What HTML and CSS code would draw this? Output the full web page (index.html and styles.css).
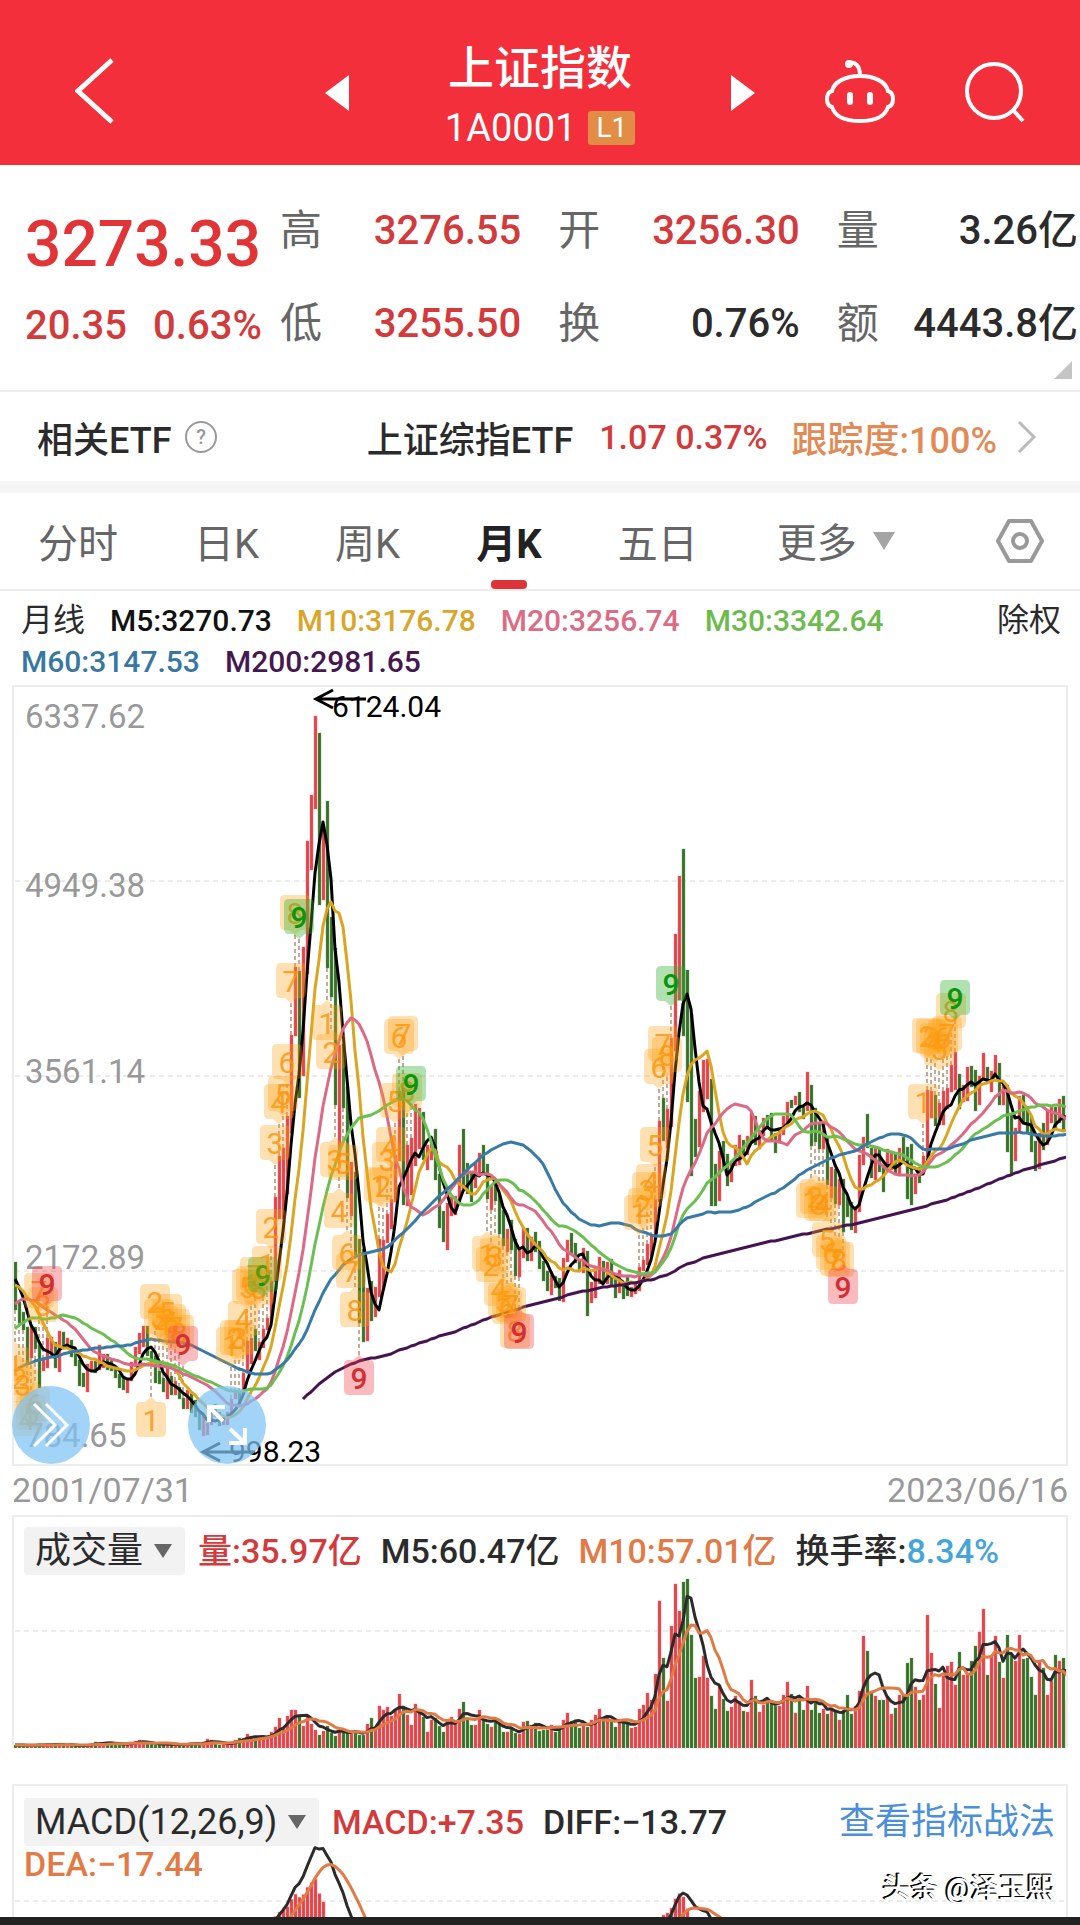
FILE: index.html
```html
<!DOCTYPE html>
<html lang="zh-CN">
<head>
  <meta charset="UTF-8">
  <meta name="viewport" content="width=device-width, initial-scale=1.0">
  <title>上证指数</title>
  <link rel="stylesheet" href="styles.css">
</head>
<body>

<header class="topbar">
  <button class="icon-btn back-btn" aria-label="返回">
    <svg width="40" height="66" viewBox="0 0 40 66"><path d="M37 2 3 33 37 64" fill="none" stroke="#fff" stroke-width="5"/></svg>
  </button>
  <div class="title-group">
    <button class="icon-btn" aria-label="上一个">
      <svg width="24" height="36" viewBox="0 0 24 36"><path d="M24 0 0 18 24 36z" fill="#fff"/></svg>
    </button>
    <div class="title">
      <h1>上证指数</h1>
      <div class="code">1A0001 <span class="level">L1</span></div>
    </div>
    <button class="icon-btn" aria-label="下一个">
      <svg width="24" height="36" viewBox="0 0 24 36"><path d="M0 0 24 18 0 36z" fill="#fff"/></svg>
    </button>
  </div>
  <div class="tools">
    <button class="icon-btn" aria-label="智能助手">
      <svg width="70" height="66" viewBox="0 0 70 66" fill="none" stroke="#fff" stroke-width="4" stroke-linecap="round">
        <path d="M24 4c6-2 11 3 11 12"/>
        <circle cx="24" cy="5" r="2"/>
        <path d="M35 17C20 17 9 23 7 32c-4 1-5 4-5 8s1 7 5 8c3 10 13 14 28 14s25-4 28-14c4-1 5-4 5-8s-1-7-5-8c-2-9-13-15-28-15z"/>
        <path d="M25 36v7M45 36v7" stroke-width="6"/>
      </svg>
    </button>
    <button class="icon-btn" aria-label="搜索">
      <svg width="62" height="62" viewBox="0 0 62 62" fill="none" stroke="#fff" stroke-width="4">
        <circle cx="30" cy="30" r="27"/><path d="M49 49 59 60"/>
      </svg>
    </button>
  </div>
</header>

<section class="quote">
  <div class="price">
    <div class="last">3273.33</div>
    <div class="change"><span>20.35</span><span>0.63%</span></div>
  </div>
  <dl class="stats">
    <div><dt>高</dt><dd class="up">3276.55</dd></div>
    <div><dt>开</dt><dd class="up">3256.30</dd></div>
    <div><dt>量</dt><dd>3.26亿</dd></div>
    <div><dt>低</dt><dd class="up">3255.50</dd></div>
    <div><dt>换</dt><dd>0.76%</dd></div>
    <div><dt>额</dt><dd>4443.8亿</dd></div>
  </dl>
  <svg class="corner" width="18" height="18" viewBox="0 0 18 18"><path d="M18 0v18H0z" fill="#c4c4c4"/></svg>
</section>

<a class="etf" href="#etf">
  <span>相关ETF</span>
  <svg class="help" width="32" height="32" viewBox="0 0 32 32">
    <circle cx="16" cy="16" r="15" fill="none" stroke="#999" stroke-width="2"/>
    <text x="16" y="23" text-anchor="middle">?</text>
  </svg>
  <span class="etf-name">上证综指ETF</span>
  <span class="etf-price up">1.07 0.37%</span>
  <span class="track">跟踪度:100%</span>
  <svg width="20" height="34" viewBox="0 0 20 34"><path d="M2 2 17 17 2 32" fill="none" stroke="#bbb" stroke-width="3"/></svg>
</a>

<nav class="tabs">
  <button>分时</button>
  <button>日K</button>
  <button>周K</button>
  <button class="active">月K</button>
  <button>五日</button>
  <label class="more">
    <select aria-label="更多周期"><option>更多</option></select>
    <svg width="22" height="18" viewBox="0 0 22 18"><path d="M0 0h22L11 18z" fill="#a5a5a5"/></svg>
  </label>
  <button class="settings" aria-label="设置">
    <svg width="50" height="46" viewBox="0 0 50 46" fill="none" stroke="#999" stroke-width="4" stroke-linejoin="round">
      <path d="M14 3h22l11 20-11 20H14L3 23z"/><circle cx="25" cy="23" r="7"/>
    </svg>
  </button>
</nav>

<div class="ma-legend">
  <div class="ma-values">
    <span class="cn">月线</span>
    <span class="m5">M5:3270.73</span>
    <span class="m10">M10:3176.78</span>
    <span class="m20">M20:3256.74</span>
    <span class="m30">M30:3342.64</span>
    <span class="m60">M60:3147.53</span>
    <span class="m200">M200:2981.65</span>
  </div>
  <button class="cn adjust">除权</button>
</div>

<main class="charts">
  <div class="kline">
    <svg id="kline" viewBox="-1 1 1052 777"></svg>
    <button class="round expand" aria-label="展开">
      <svg viewBox="0 0 78 78" fill="none" stroke="#fff" stroke-width="3"><path d="M22 18 43 39 22 60M34 18 55 39 34 60"/></svg>
    </button>
    <button class="round fullscreen" aria-label="全屏">
      <svg viewBox="0 0 78 78" fill="none" stroke="#fff" stroke-width="4"><path d="M35 35 21 21M21 36V21H37M42 43 57 57M57 42V57H41"/></svg>
    </button>
  </div>
  <div class="dates"><span>2001/07/31</span><span>2023/06/16</span></div>

  <section class="panel volume">
    <div class="panel-legend">
      <label class="picker">
        <select aria-label="指标"><option>成交量</option></select>
        <svg width="18" height="14" viewBox="0 0 18 14"><path d="M0 0h18L9 14z" fill="#666"/></svg>
      </label>
      <span class="up">量:35.97亿</span>
      <span>M5:60.47亿</span>
      <span class="orange">M10:57.01亿</span>
      <span>换手率:<span class="blue">8.34%</span></span>
    </div>
    <svg id="volume" viewBox="-1 0 1052 172"></svg>
  </section>

  <section class="panel macd">
    <svg id="macd" viewBox="-1 0 1052 132"></svg>
    <div class="panel-legend">
      <label class="picker">
        <select aria-label="指标"><option>MACD(12,26,9)</option></select>
        <svg width="18" height="14" viewBox="0 0 18 14"><path d="M0 0h18L9 14z" fill="#666"/></svg>
      </label>
      <span class="up">MACD:+7.35</span>
      <span>DIFF:−13.77</span>
      <a class="guide" href="#guide">查看指标战法</a>
    </div>
    <div class="dea orange">DEA:−17.44</div>
    <div class="credit">头条 @泽玉熙</div>
  </section>
</main>
<div class="bottom-bar"></div>

<script src="script.js"></script>
</body>
</html>
```
FILE: styles.css
```css
* {
  box-sizing: border-box;
}
body {
  margin: 0;
  background: #fff;
  color: #2b2b2b;
  font-family: Roboto, "Noto Sans CJK SC", sans-serif;
  font-weight: 500;
}
button, select {
  padding: 0;
  border: none;
  background: none;
  color: inherit;
  font: inherit;
  cursor: pointer;
}
select {
  appearance: none;
}
svg {
  display: block;
}
.up {
  color: #d23a3c;
}
.orange {
  color: #e27a45;
}
.blue {
  color: #45a5d8;
}

/* header */
.topbar {
  display: grid;
  grid-template-columns: 1fr auto 1fr;
  height: 165px;
  padding: 0 54px;
  background: #f22f3a;
  color: #fff;
}
.back-btn {
  justify-self: start;
  margin: 16px 0 0 21px;
}
.title-group {
  display: flex;
  align-items: center;
  gap: 96px;
  padding-top: 20px;
}
.title {
  padding-top: 8px;
  text-align: center;
}
.title h1 {
  margin: 0;
  font-size: 46px;
  line-height: 62px;
  font-weight: 500;
}
.code {
  display: flex;
  align-items: center;
  justify-content: center;
  gap: 12px;
  font-size: 38px;
  font-weight: 400;
  line-height: 58px;
}
.level {
  padding: 0 8px;
  border-radius: 3px;
  background: #e28d45;
  font-size: 28px;
  line-height: 34px;
}
.tools {
  display: flex;
  align-items: center;
  justify-content: flex-end;
  gap: 69px;
  padding-top: 18px;
}

/* quote */
.quote {
  display: grid;
  grid-template-columns: 255px 1fr;
  position: relative;
  height: 227px;
  padding: 27px 2px 0 25px;
  border-bottom: 2px solid #ececec;
}
.last {
  color: #e03436;
  font-size: 64px;
  line-height: 106px;
}
.change {
  display: flex;
  gap: 26px;
  color: #d23a3c;
  font-size: 40px;
  line-height: 56px;
}
.stats {
  display: grid;
  grid-template-columns: repeat(3, 1fr);
  column-gap: 37px;
  grid-auto-rows: 93px;
  margin: 0;
}
.stats div {
  display: flex;
  justify-content: space-between;
  font-size: 40px;
  line-height: 78px;
  white-space: nowrap;
}
.stats dt {
  color: #666;
  font-size: 42px;
  font-weight: 400;
}
.stats dd {
  margin: 0;
}
.corner {
  position: absolute;
  right: 8px;
  bottom: 11px;
}

/* related etf */
.etf {
  display: flex;
  align-items: center;
  height: 101px;
  padding: 0 43px 0 37px;
  border-bottom: 12px solid #f5f5f5;
  color: inherit;
  font-size: 36px;
  text-decoration: none;
}
.help {
  margin-left: 14px;
}
.help text {
  fill: #999;
  font-size: 20px;
}
.etf-name {
  margin-left: auto;
}
.etf-price {
  margin: 0 24px 0 26px;
  font-size: 34px;
}
.track {
  margin-right: 20px;
  color: #e28a55;
}

/* period tabs */
.tabs {
  display: flex;
  align-items: center;
  gap: 76px;
  height: 98px;
  padding: 0 35px 0 38px;
  border-bottom: 2px solid #ececec;
  color: #666;
  font-size: 40px;
  font-weight: 400;
}
.tabs .active {
  position: relative;
  height: 100%;
  color: #222;
  font-weight: 700;
}
.active::after {
  content: "";
  position: absolute;
  left: 50%;
  bottom: 0;
  width: 36px;
  height: 9px;
  margin-left: -18px;
  border-radius: 4px;
  background: #dc3438;
}
.more {
  display: flex;
  align-items: center;
  gap: 16px;
  padding-left: 3px;
}
.more select {
  padding-top: 4px;
}
.settings {
  margin-left: auto;
}

/* moving averages */
.ma-legend {
  display: flex;
  justify-content: space-between;
  padding: 9px 19px 3px 21px;
  font-size: 30px;
  line-height: 41px;
}
.ma-values {
  display: flex;
  flex-wrap: wrap;
  column-gap: 25px;
  max-width: 900px;
}
.cn {
  font-size: 32px;
  font-weight: 400;
}
.adjust {
  align-self: flex-start;
  line-height: 41px;
}
.m5 { color: #111; }
.m10 { color: #d9a62a; }
.m20 { color: #dc6b84; }
.m30 { color: #6dbb4e; }
.m60 { color: #3778a3; }
.m200 { color: #471850; }

/* charts */
.charts {
  padding: 0 12px;
}
.kline {
  position: relative;
  border: 2px solid #ececec;
}
.kline > svg, .panel > svg {
  width: 100%;
}
.round {
  position: absolute;
  bottom: 0;
  width: 78px;
  height: 78px;
  border-radius: 50%;
  background: rgba(126, 196, 245, 0.72);
}
.expand {
  left: -2px;
}
.fullscreen {
  left: 174px;
}
.dates {
  display: flex;
  justify-content: space-between;
  color: #999;
  font-size: 34px;
  font-weight: 400;
  line-height: 49px;
}
.panel {
  border: 2px solid #ececec;
  border-bottom: none;
}
.panel-legend {
  display: flex;
  align-items: center;
  gap: 19px;
  padding: 10px 11px 0 10px;
  font-size: 34px;
  line-height: 48px;
  white-space: nowrap;
}
.picker {
  display: flex;
  align-items: center;
  gap: 10px;
  margin-right: -6px;
  padding: 0 13px 0 11px;
  border-radius: 4px;
  background: #f2f2f2;
  font-size: 36px;
  font-weight: 400;
}
.picker select {
  height: 48px;
}
.volume {
  margin-bottom: 36px;
}
.volume .panel-legend {
  padding-bottom: 1px;
}
.macd {
  position: relative;
  height: 133px;
  overflow: hidden;
}
.macd > svg {
  position: absolute;
  top: 0;
  left: 0;
}
.macd .panel-legend, .dea {
  position: relative;
}
.macd .panel-legend {
  padding-top: 12px;
}
.guide {
  margin-left: auto;
  color: #4a8fd8;
  font-size: 36px;
  font-weight: 400;
  text-decoration: none;
}
.dea {
  padding-left: 10px;
  font-size: 34px;
  line-height: 36px;
}
.credit {
  position: absolute;
  right: 11px;
  bottom: 8px;
  color: #fff;
  font-size: 28px;
  line-height: 40px;
  text-shadow: -1px -1px 0 #000, -2px -1px 0 #000;
}
.bottom-bar {
  height: 9px;
  background: #222;
}

/* svg parts */
.grid {
  stroke: #ececec;
  stroke-width: 2;
  stroke-dasharray: 5 4;
}
.axis {
  fill: #999;
  font-size: 33px;
  font-weight: 400;
}
.bar-up {
  fill: #e0454b;
  stroke: #ff6b6b;
}
.bar-down {
  fill: #37702a;
  stroke: #6fa860;
}
.bar-up, .bar-down {
  stroke-width: 1;
  stroke-opacity: 0.4;
}
.line {
  fill: none;
  stroke-width: 3;
  stroke-linejoin: round;
}
.stem {
  stroke: #8a5a2a;
  stroke-width: 1;
  stroke-dasharray: 4 3;
}
.mark {
  font-size: 30px;
  font-weight: 400;
  text-anchor: middle;
}
.mark path { fill: rgba(255, 160, 20, 0.33); }
.mark text { fill: rgba(250, 150, 20, 0.85); }
.mark.sell path { fill: rgba(50, 175, 50, 0.38); }
.mark.sell text { fill: #0a960a; font-weight: 500; }
.mark.buy path { fill: rgba(240, 60, 70, 0.35); }
.mark.buy text { fill: #d22f35; font-weight: 500; }
.note {
  fill: #000;
  font-size: 30px;
  font-weight: 400;
}
.arrow {
  fill: none;
  stroke: #000;
  stroke-width: 3;
}
```
FILE: script.js
```js
// monthly closes before the visible range, needed for the long averages
const history = [
  128,
  130,133,120,114,115,138,144,178,181,219,260,293,
  313,365,381,445,1235,1191,1052,823,702,507,725,780,
  1198,1340,926,1359,935,1007,882,895,890,815,984,834,
  770,771,704,592,556,469,334,785,791,655,683,648,
  563,549,647,580,700,631,695,724,723,717,641,555,
  537,553,556,681,644,804,822,810,875,977,1032,917,
  965,1040,1235,1394,1285,1250,1190,1221,1097,1180,1139,1194,
  1223,1206,1243,1343,1411,1339,1317,1150,1243,1217,1247,1147,
  1135,1090,1158,1121,1279,1689,1601,1627,1571,1505,1435,1367,
  1535,1715,1800,1837,1895,1928,2024,2021,1910,1961,2071,2073,
  2066,1959,2113,2119,2214,2218
];

// high, low, close for each month from 2001/07
const months = [
  [2240,1892,1920],[1955,1801,1834],[1883,1753,1764],[1776,1514,1689],[1776,1550,1747],[1776,1620,1645],
  [1643,1339,1491],[1544,1460,1524],[1693,1485,1603],[1700,1565,1667],[1667,1479,1515],[1748,1455,1732],[1738,1620,1651],[1696,1625,1666],[1680,1558,1581],[1600,1500,1507],[1540,1353,1434],[1450,1348,1357],
  [1509,1311,1499],[1530,1465,1511],[1530,1447,1510],[1649,1466,1521],[1582,1480,1576],[1583,1470,1486],[1537,1464,1476],[1493,1411,1421],[1438,1342,1367],[1422,1328,1348],[1404,1307,1397],[1526,1392,1497],
  [1634,1491,1590],[1730,1580,1675],[1778,1634,1741],[1783,1570,1595],[1605,1503,1555],[1566,1376,1399],[1458,1370,1386],[1413,1310,1342],[1496,1259,1396],[1425,1289,1320],[1388,1287,1340],[1349,1260,1266],
  [1268,1189,1191],[1328,1187,1306],[1309,1162,1181],[1254,1135,1159],[1160,1043,1060],[1146,998,1080],[1092,1004,1083],[1203,1080,1163],[1223,1130,1155],[1168,1068,1092],[1118,1074,1099],[1169,1074,1161],
  [1259,1161,1258],[1308,1260,1299],[1313,1238,1298],[1445,1297,1440],[1678,1444,1641],[1695,1512,1672],[1757,1602,1612],[1666,1541,1658],[1758,1627,1752],[1841,1751,1837],[2102,1825,2099],[2698,2098,2675],
  [2994,2541,2786],[3049,2541,2881],[3273,2723,3183],[3851,3152,3841],[4335,3845,4109],[4312,3404,3820],[4476,3563,4471],[5235,4285,5218],[5560,5025,5552],[6124,5462,5954],[6005,4778,4871],[5336,4812,5261],
  [5522,4330,4383],[4695,4123,4348],[4472,3357,3472],[3784,2990,3693],[3786,3333,3433],[3483,2693,2736],[2952,2566,2775],[2876,2284,2397],[2403,1802,2293],[2333,1664,1728],[2050,1678,1871],[2100,1814,1820],
  [2060,1844,1990],[2402,1987,2082],[2392,2037,2373],[2579,2370,2477],[2688,2475,2632],[2997,2665,2959],[3454,2954,3412],[3478,2640,2667],[3068,2639,2779],[3123,2712,2995],[3361,2923,3195],[3334,3039,3277],
  [3307,2963,2989],[3067,2890,3051],[3127,2963,3109],[3181,2820,2870],[2860,2482,2592],[2598,2382,2398],[2656,2319,2637],[2701,2564,2638],[2704,2573,2655],[3073,2656,2978],[3186,2758,2820],[2939,2721,2808],
  [2868,2661,2790],[2944,2767,2905],[3012,2850,2928],[3067,2870,2911],[2933,2689,2743],[2775,2610,2762],[2826,2670,2701],[2712,2437,2567],[2607,2348,2359],[2474,2307,2468],[2536,2319,2333],[2402,2134,2199],
  [2324,2132,2292],[2478,2265,2428],[2476,2242,2262],[2415,2243,2396],[2453,2309,2372],[2388,2188,2225],[2244,2100,2103],[2176,2032,2047],[2145,1999,2086],[2138,2053,2068],[2123,1959,1980],[2269,1949,2269],
  [2391,2235,2385],[2444,2289,2365],[2369,2232,2236],[2253,2165,2177],[2334,2161,2300],[2313,1849,1979],[2092,1946,1993],[2198,1979,2098],[2270,2078,2174],[2242,2093,2141],[2234,2078,2220],[2260,2068,2115],
  [2113,1984,2033],[2177,2014,2056],[2079,1974,2033],[2146,1997,2026],[2061,1991,2039],[2087,2010,2048],[2202,2033,2201],[2248,2174,2217],[2365,2217,2363],[2423,2279,2420],[2683,2401,2682],[3239,2665,3234],
  [3406,3095,3210],[3324,3049,3310],[3835,3198,3747],[4572,3742,4441],[4986,4099,4611],[5178,3847,4277],[4317,3373,3663],[4006,2850,3205],[3256,2983,3052],[3457,3053,3382],[3678,3302,3445],[3684,3399,3539],
  [3538,2638,2737],[2933,2638,2687],[3028,2668,3003],[3097,2905,2938],[3004,2780,2916],[2945,2807,2929],[3069,2922,2979],[3140,2931,3085],[3105,2969,3004],[3137,3000,3100],[3301,3094,3250],[3279,3068,3103],
  [3174,3044,3159],[3264,3132,3241],[3283,3193,3222],[3295,3097,3154],[3154,3016,3117],[3193,3081,3192],[3276,3139,3273],[3375,3200,3360],[3391,3332,3348],[3421,3357,3393],[3450,3305,3317],[3341,3254,3307],
  [3587,3315,3480],[3495,3062,3259],[3333,3091,3168],[3220,3041,3082],[3219,3041,3095],[3128,2782,2847],[2915,2691,2876],[2897,2653,2725],[2827,2644,2821],[2827,2449,2602],[2703,2555,2588],[2666,2462,2493],
  [2630,2440,2584],[2997,2590,2940],[3129,2930,3090],[3288,3050,3078],[3052,2838,2898],[3051,2822,2978],[3048,2880,2932],[2928,2733,2886],[3042,2885,2905],[3026,2891,2929],[3008,2857,2871],[3051,2857,3050],
  [3127,2955,2976],[3058,2685,2880],[3074,2646,2750],[2865,2719,2860],[2914,2802,2852],[2991,2872,2984],[3458,2984,3310],[3456,3263,3395],[3425,3202,3218],[3371,3209,3224],[3456,3209,3391],[3474,3325,3473],
  [3637,3446,3483],[3731,3465,3509],[3576,3328,3441],[3497,3373,3446],[3626,3384,3615],[3629,3484,3591],[3604,3312,3397],[3560,3358,3543],[3723,3534,3568],[3625,3509,3547],[3600,3448,3563],[3708,3554,3639],
  [3651,3356,3361],[3500,3356,3462],[3500,3023,3252],[3290,2863,3047],[3188,2958,3186],[3417,3157,3398],[3424,3226,3253],[3322,3156,3202],[3279,3021,3024],[3099,2885,2893],[3158,2896,3151],[3226,3031,3089],
  [3310,3073,3255],[3342,3224,3279],[3342,3184,3272],[3396,3227,3323],[3418,3168,3204],[3283,3168,3273]
];

const volumes = [
  3,3,3,2,3,3,4,3,3,3,4,5,3,3,2,2,3,3,3,4,6,5,5,5,5,4,3,3,5,6,
  7,8,5,4,4,3,5,4,4,3,3,4,4,4,5,4,4,6,9,8,4,3,4,5,6,8,10,
  10,14,11,11,10,11,12,16,21,30,20,32,38,38,33,22,33,24,18,13,17,22,15,
  12,18,17,17,14,17,13,13,24,30,20,42,38,41,32,37,54,40,33,23,
  44,38,31,16,28,30,22,16,27,31,27,39,46,30,23,23,38,28,24,21,
  26,23,16,16,20,15,14,26,27,23,25,17,18,18,23,16,18,28,35,27,
  27,20,22,21,28,33,39,28,30,26,21,27,26,25,20,21,39,43,55,48,
  74,147,90,47,122,164,137,166,169,113,70,71,92,70,52,39,63,49,37,41,
  52,47,37,36,68,52,36,43,50,47,42,42,53,66,54,35,52,38,62,38,
  48,35,39,34,40,38,28,38,53,34,42,57,112,97,57,52,48,48,52,34,
  40,53,52,85,90,61,48,53,133,95,64,40,72,82,86,63,96,73,73,87,
  102,116,139,73,92,112,86,70,113,93,87,113,89,90,71,53,87,80,53,67,
  93,87,90,47
];

const closes = history.concat(months.map(m => m[2]));
const first = history.length;
const step = 4;

function x(i) {
  return i * step;
}

function average(values, end, n) {
  const part = values.slice(Math.max(0, end - n + 1), end + 1);
  return part.reduce((a, b) => a + b, 0) / part.length;
}

function line(points, color) {
  return `<polyline class="line" points="${points.map(p => p[0] + ',' + p[1].toFixed(1)).join(' ')}" stroke="${color}"/>`;
}

function bar(i, top, bottom) {
  const side = closes[first + i] >= closes[first + i - 1] ? 'up' : 'down';
  return `<rect class="bar-${side}" x="${x(i) - 1}" y="${top.toFixed(1)}" width="3" height="${Math.max(1, bottom - top).toFixed(1)}"/>`;
}

// bubble with its tip at (cx, tip), above or below the tip
function mark(cx, tip, count, above, kind) {
  const s = above ? -1 : 1;
  const near = tip + s * 5;
  const far = tip + s * 40;
  const k = s * 5;
  const shape = `M${cx} ${tip}L${cx + 6} ${near}H${cx + 10}Q${cx + 15} ${near} ${cx + 15} ${near + k}V${far - k}Q${cx + 15} ${far} ${cx + 10} ${far}H${cx - 10}Q${cx - 15} ${far} ${cx - 15} ${far - k}V${near + k}Q${cx - 15} ${near} ${cx - 10} ${near}H${cx - 6}z`;
  return `<g class="mark ${kind}"><path d="${shape}"/><text x="${cx}" y="${(near + far) / 2 + 11}">${count}</text></g>`;
}

function drawKline() {
  const y = p => Math.round((6337.62 - p) * 195 / 1388.24);
  let out = '';
  [195, 390, 585].forEach(g => {
    out += `<line class="grid" x1="0" x2="1054" y1="${g}" y2="${g}"/>`;
  });
  [['6337.62', 42], ['4949.38', 211], ['3561.14', 397], ['2172.89', 583], ['784.65', 761]].forEach(a => {
    out += `<text class="axis" x="10" y="${a[1]}">${a[0]}</text>`;
  });

  // nine-month runs: close above (or below) the close four months before
  let marks = '';
  [1, -1].forEach(dir => {
    let run = 0;
    for (let i = 0; i < months.length; i++) {
      const diff = closes[first + i] - closes[first + i - 4];
      run = diff * dir > 0 ? run + 1 : 0;
      if (run < 9) continue;
      for (let n = 1; n <= 9; n++) {
        const j = i - 9 + n;
        const low = y(months[j][1]);
        const above = dir > 0 || low > 680;
        const from = above ? y(months[j][0]) : low;
        const tip = from + (above ? -32 : 32);
        out += `<line class="stem" x1="${x(j)}" x2="${x(j)}" y1="${from}" y2="${tip}"/>`;
        marks += mark(x(j), tip, n, above, n < 9 ? '' : dir > 0 ? 'sell' : 'buy');
      }
      run = 0;
    }
  });

  months.forEach((m, i) => {
    out += bar(i, y(m[0]), y(m[1]));
  });
  [[5, '#000'], [10, '#dba520'], [20, '#dc6985'], [30, '#6bbf50'], [60, '#377aa5'], [200, '#451450']].forEach(ma => {
    const points = [];
    months.forEach((m, i) => {
      if (first + i + 1 >= ma[0]) points.push([x(i), y(average(closes, first + i, ma[0]))]);
    });
    out += line(points, ma[1]);
  });
  out += marks;
  out += '<path class="arrow" d="M351 13H301M318 4 301 13 318 22"/><text class="note" x="317" y="31">6124.04</text>';
  out += '<path class="arrow" d="M240 766H188M205 757 188 766 205 775"/><text class="note" x="214" y="776">998.23</text>';
  document.getElementById('kline').innerHTML = out;
}

function drawVolume() {
  let out = '<line class="grid" x1="0" x2="1054" y1="55" y2="55"/>';
  volumes.forEach((v, i) => {
    out += bar(i, 172 - v, 172);
  });
  out += line(volumes.map((v, i) => [x(i), 172 - average(volumes, i, 5)]), '#2b2b2b');
  out += line(volumes.map((v, i) => [x(i), 172 - average(volumes, i, 10)]), '#e27a45');
  document.getElementById('volume').innerHTML = out;
}

function drawMacd() {
  const zero = 154;
  const y = v => zero - v * 0.09;
  let fast = closes[0], slow = closes[0], dea = 0;
  const diffLine = [], deaLine = [];
  let out = '<line class="grid" x1="0" x2="1054" y1="115" y2="115"/>';
  closes.forEach((c, n) => {
    fast += (c - fast) * 2 / 13;
    slow += (c - slow) * 2 / 27;
    const diff = fast - slow;
    dea += (diff - dea) * 2 / 10;
    const i = n - first;
    if (i < 0) return;
    const hist = 2 * (diff - dea);
    if (hist > 0) out += `<rect class="bar-up" x="${x(i) - 1}" y="${y(hist).toFixed(1)}" width="3" height="${(zero - y(hist)).toFixed(1)}"/>`;
    diffLine.push([x(i), y(diff)]);
    deaLine.push([x(i), y(dea)]);
  });
  out += line(diffLine, '#2b2b2b') + line(deaLine, '#e27a45');
  document.getElementById('macd').innerHTML = out;
}

drawKline();
drawVolume();
drawMacd();
```
